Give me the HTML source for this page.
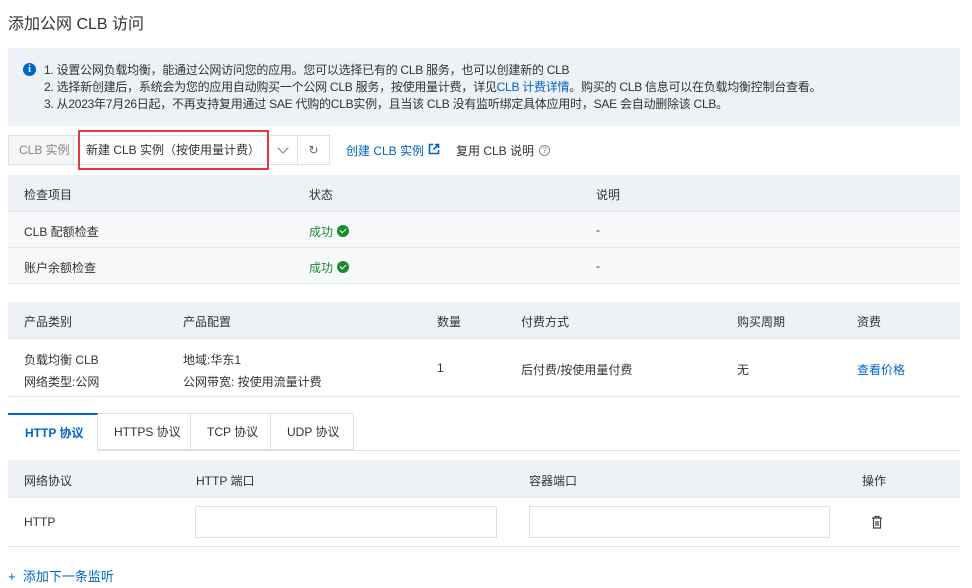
<!DOCTYPE html>
<html><head><meta charset="utf-8"><style>
*{box-sizing:border-box;margin:0;padding:0}
body{width:972px;height:588px;background:#fff;font-family:"Liberation Sans","Noto Sans CJK SC",sans-serif;font-size:12px;color:#333;position:relative;overflow:hidden}
.a{position:absolute;white-space:nowrap}
.blue{color:#0064c8}
.hd{position:absolute;left:8px;width:952px;background:#eef1f6;border-bottom:1px solid #e3e6ea}
.row{position:absolute;left:8px;width:952px;border-bottom:1px solid #e3e6ea}
.ok{display:inline-block;width:12px;height:12px;border-radius:50%;background:#1b8a2e;vertical-align:-1px;margin-left:4px;position:relative}
.ok:after{content:"";position:absolute;left:3px;top:2.5px;width:5px;height:3px;border-left:1.6px solid #fff;border-bottom:1.6px solid #fff;transform:rotate(-45deg)}
</style></head><body>
<div class="a" style="left:8px;top:10px;font-size:16px;color:#333">添加公网 CLB 访问</div>

<div class="a" style="left:8px;top:48px;width:952px;height:78px;background:#eef1f6"></div>
<div class="a" style="left:23px;top:63px;width:13px;height:13px;border-radius:50%;background:#0064c8;color:#fff;font-size:10px;font-weight:bold;text-align:center;line-height:13px;font-family:'Liberation Serif',serif">i</div>
<div class="a" style="left:44px;top:62px;line-height:17px;color:#333;letter-spacing:-0.25px">1. 设置公网负载均衡，能通过公网访问您的应用。您可以选择已有的 CLB 服务，也可以创建新的 CLB<br>2. 选择新创建后，系统会为您的应用自动购买一个公网 CLB 服务，按使用量计费，详见<span class="blue">CLB 计费详情</span>。购买的 CLB 信息可以在负载均衡控制台查看。<br>3. 从2023年7月26日起，不再支持复用通过 SAE 代购的CLB实例，且当该 CLB 没有监听绑定具体应用时，SAE 会自动删除该 CLB。</div>

<div class="a" style="left:8px;top:135px;width:66px;height:30px;background:#f5f6f8;border:1px solid #dcdfe3;color:#888;line-height:28px;padding-left:10px">CLB 实例</div>
<div class="a" style="left:73px;top:135px;width:225px;height:30px;border:1px solid #dcdfe3;line-height:28px;padding-left:12px;color:#333">新建 CLB 实例（按使用量计费）</div>
<div class="a" style="left:279px;top:144px;width:8px;height:8px;border-right:1.3px solid #777;border-bottom:1.3px solid #777;transform:rotate(45deg)"></div>
<div class="a" style="left:297px;top:135px;width:33px;height:30px;border:1px solid #dcdfe3;color:#666;text-align:center;line-height:28px;font-size:12px">↻</div>
<div class="a" style="left:78px;top:130px;width:191px;height:40px;border:2px solid #e0393e"></div>
<div class="a blue" style="left:346px;top:142px">创建 CLB 实例</div>
<svg class="a" style="left:428px;top:143px" width="12" height="12" viewBox="0 0 12 12"><path d="M5 1.5H1.5v9h9V7" fill="none" stroke="#0064c8" stroke-width="1.6"/><path d="M7 1.5h3.5V5M10.5 1.5L5.5 6.5" fill="none" stroke="#0064c8" stroke-width="1.6"/></svg>
<div class="a" style="left:456px;top:142px">复用 CLB 说明</div>
<div class="a" style="left:539px;top:145px;width:11px;height:11px;border:1px solid #888;border-radius:50%;font-size:8px;color:#888;text-align:center;line-height:9px">?</div>

<div class="hd" style="top:175px;height:37px"></div>
<div class="a" style="left:24px;top:186px">检查项目</div><div class="a" style="left:309px;top:186px">状态</div><div class="a" style="left:596px;top:186px">说明</div>
<div class="row" style="top:212px;height:36px;background:#f7f8fa"></div>
<div class="a" style="left:24px;top:223px">CLB 配额检查</div><div class="a" style="left:309px;top:223px;color:#1b8a2e">成功<span class="ok"></span></div><div class="a" style="left:596px;top:223px">-</div>
<div class="row" style="top:248px;height:36px;background:#f7f8fa"></div>
<div class="a" style="left:24px;top:259px">账户余额检查</div><div class="a" style="left:309px;top:259px;color:#1b8a2e">成功<span class="ok"></span></div><div class="a" style="left:596px;top:259px">-</div>

<div class="hd" style="top:302px;height:37px"></div>
<div class="a" style="left:24px;top:313px">产品类别</div><div class="a" style="left:183px;top:313px">产品配置</div><div class="a" style="left:437px;top:313px">数量</div><div class="a" style="left:521px;top:313px">付费方式</div><div class="a" style="left:737px;top:313px">购买周期</div><div class="a" style="left:857px;top:313px">资费</div>
<div class="row" style="top:339px;height:58px"></div>
<div class="a" style="left:24px;top:349px;line-height:22px">负载均衡 CLB<br>网络类型:公网</div>
<div class="a" style="left:183px;top:349px;line-height:22px">地域:华东1<br>公网带宽: 按使用流量计费</div>
<div class="a" style="left:437px;top:361px">1</div><div class="a" style="left:521px;top:361px">后付费/按使用量付费</div><div class="a" style="left:737px;top:361px">无</div><div class="a blue" style="left:857px;top:361px">查看价格</div>

<div class="a" style="left:8px;top:450px;width:952px;border-top:1px solid #dcdfe3"></div>
<div class="a" style="left:8px;top:413px;width:90px;height:38px;border-top:2px solid #0064c8;border-right:1px solid #dcdfe3;background:#fff;color:#0064c8;font-weight:bold;padding-left:17px;line-height:36px">HTTP 协议</div>
<div class="a" style="left:98px;top:413px;width:93px;height:37px;border:1px solid #dcdfe3;border-left:none;padding-left:16px;line-height:37px">HTTPS 协议</div>
<div class="a" style="left:190px;top:413px;width:81px;height:37px;border:1px solid #dcdfe3;border-left:none;padding-left:17px;line-height:37px">TCP 协议</div>
<div class="a" style="left:270px;top:413px;width:84px;height:37px;border:1px solid #dcdfe3;border-left:none;padding-left:17px;line-height:37px">UDP 协议</div>

<div class="hd" style="top:460px;height:38px"></div>
<div class="a" style="left:24px;top:472px">网络协议</div><div class="a" style="left:196px;top:472px">HTTP 端口</div><div class="a" style="left:529px;top:472px">容器端口</div><div class="a" style="left:862px;top:472px">操作</div>
<div class="row" style="top:498px;height:49px"></div>
<div class="a" style="left:24px;top:515px">HTTP</div>
<div class="a" style="left:195px;top:506px;width:302px;height:32px;border:1px solid #dcdfe3;background:#fff"></div>
<div class="a" style="left:529px;top:506px;width:301px;height:32px;border:1px solid #dcdfe3;background:#fff"></div>
<svg class="a" style="left:871px;top:515px" width="12" height="14" viewBox="0 0 12 14"><path d="M1 3h10M4 3V1.5h4V3M2.5 3v10h7V3M5 6v5M7 6v5" fill="none" stroke="#444" stroke-width="1.2"/></svg>

<div class="a blue" style="left:8px;top:566px;font-size:13px">+&nbsp; 添加下一条监听</div>
</body></html>
